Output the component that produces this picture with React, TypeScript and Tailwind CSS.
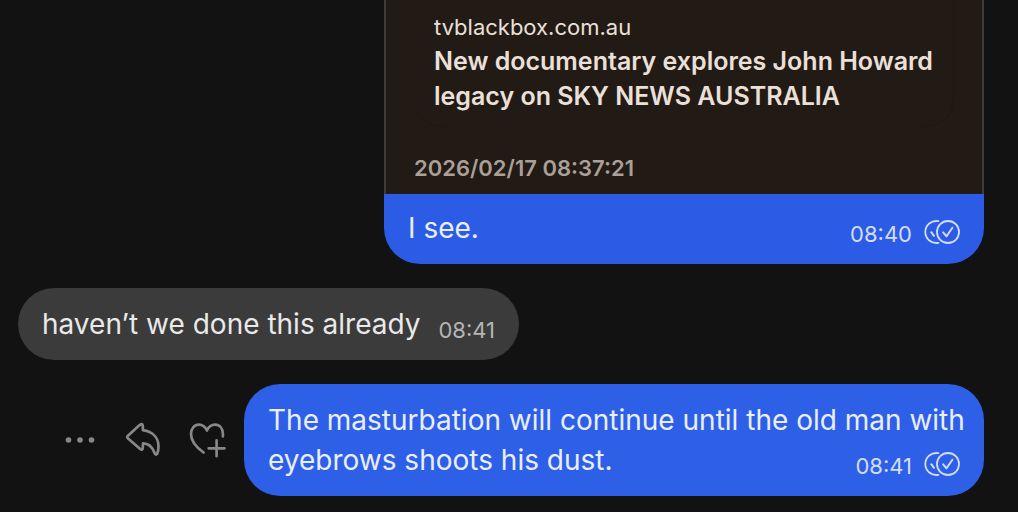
import type { ReactNode } from "react";

function ReadReceipt() {
  return (
    <svg viewBox="0 0 36 24" className="h-6 w-9 shrink-0" fill="none" stroke="currentColor" strokeWidth="1.8" strokeLinecap="round" strokeLinejoin="round" role="img" aria-label="Read">
      <path d="M14.4 1.2A11 11 0 1 0 14.4 22.8" />
      <path d="M7.3 12.2 10 15.8" strokeWidth="2" />
      <circle cx="24" cy="12" r="11" />
      <path d="M19.2 12.4 22.5 16.3 28.4 7.8" strokeWidth="2" />
    </svg>
  );
}

function Meta({ time, sent = false }: { time: string; sent?: boolean }) {
  return (
    <span className={sent ? "flex shrink-0 items-start gap-3 text-[#d3ddfb]" : "flex shrink-0 items-start text-[#b5b5b5]"}>
      <time className="text-[22px] leading-7">{time}</time>
      {sent && <ReadReceipt />}
    </span>
  );
}

function IconButton({ label, children }: { label: string; children: ReactNode }) {
  return (
    <button type="button" aria-label={label} className="flex size-10 items-center justify-center text-[#878787]">
      <svg viewBox="0 0 40 40" className="size-10" fill="none" stroke="currentColor" strokeWidth="2.7" strokeLinecap="round" strokeLinejoin="round">
        {children}
      </svg>
    </button>
  );
}

export default function App() {
  return (
    <main className="flex min-h-screen flex-col gap-6 bg-[#121212] pr-[34px] pb-4 pl-[18px] font-['Inter',sans-serif] text-[28px] leading-10">
      <article className="w-[600px] max-w-full self-end overflow-hidden rounded-b-[36px] bg-[#2c5ce6] text-[#e9eefd]">
        <div className="border-x-2 border-[#423b37] bg-[#221a15] px-7 pb-[9px]">
          <a href="https://tvblackbox.com.au" className="block rounded-b-[28px] border-r border-b border-[#1c1a15] px-5 pt-[10px] pb-3 text-[#ebe0d9]">
            <span className="block text-[22px] leading-[34px]">tvblackbox.com.au</span>
            <strong className="block text-[25px] leading-[35px] font-semibold">
              New documentary explores John Howard legacy on SKY NEWS AUSTRALIA
            </strong>
          </a>
          <time className="block pt-6 text-[22px] leading-[34px] font-semibold text-[#aaa098]">2026/02/17 08:37:21</time>
        </div>
        <div className="flex items-end justify-between px-6 pt-[14px] pb-4">
          <p>I see.</p>
          <Meta time="08:40" sent />
        </div>
      </article>

      <article className="flex items-end gap-[18px] self-start rounded-[36px] bg-[#3b3b3b] px-6 py-4 text-[#e9e9e9]">
        <p>haven’t we done this already</p>
        <Meta time="08:41" />
      </article>

      <div className="flex items-center justify-end gap-4">
        <div className="flex gap-6">
          <IconButton label="More actions">
            <g fill="currentColor" stroke="none">
              <circle cx="8.5" cy="20" r="2.8" />
              <circle cx="20" cy="20" r="2.8" />
              <circle cx="31.5" cy="20" r="2.8" />
            </g>
          </IconButton>
          <IconButton label="Reply">
            <path d="M3.4 16.2 15.6 5.1Q18.6 2.7 18.8 5.8L18.9 10.2C28.9 11.6 34.4 17.8 34.5 26.3Q34.5 30.7 33.2 33.7Q31.6 35.7 30.6 33C28.2 26.7 25 23.4 19 23.4L18.8 27.8Q18.6 31 15.9 28.8L3.5 17.9Q2.7 17 3.4 16.2Z" />
          </IconButton>
          <IconButton label="React">
            <path d="M15.6 32.5C8.2 27.4 3 20.8 3 14.1 3 8.4 6.3 4.7 10.9 4.7c4.1 0 6.2 2 8 5.8C20.7 6.7 23.2 4.7 26.9 4.7c5 0 8 3.7 8 9.3v2.5" />
            <path d="M20.7 28.3h15.8M28.6 20.4v15.8" />
          </IconButton>
        </div>
        <article className="w-[740px] rounded-[36px] bg-[#2e5fe7] py-4 pr-3 pl-6 text-[#e9eefd]">
          <p>
            The masturbation will continue until the old man with{" "}
            <span className="flex items-end justify-between pr-3">
              eyebrows shoots his dust.
              <Meta time="08:41" sent />
            </span>
          </p>
        </article>
      </div>
    </main>
  );
}
